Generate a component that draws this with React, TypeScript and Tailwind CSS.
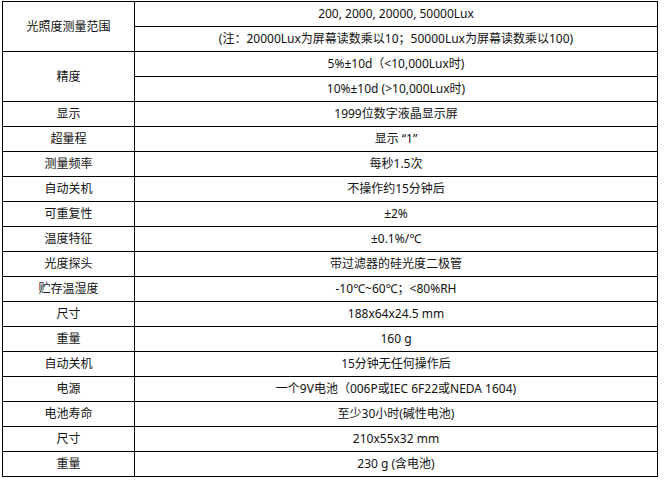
import React from "react";

type Row = { label: string; values: string[] };

const rows: Row[] = [
  {
    label: "光照度测量范围",
    values: [
      "200, 2000, 20000, 50000Lux",
      "(注：20000Lux为屏幕读数乘以10；50000Lux为屏幕读数乘以100)",
    ],
  },
  {
    label: "精度",
    values: ["5%±10d（<10,000Lux时)", "10%±10d (>10,000Lux时)"],
  },
  { label: "显示", values: ["1999位数字液晶显示屏"] },
  { label: "超量程", values: ["显示 “1”"] },
  { label: "测量频率", values: ["每秒1.5次"] },
  { label: "自动关机", values: ["不操作约15分钟后"] },
  { label: "可重复性", values: ["±2%"] },
  { label: "温度特征", values: ["±0.1%/℃"] },
  { label: "光度探头", values: ["带过滤器的硅光度二极管"] },
  { label: "贮存温湿度", values: ["-10℃~60℃；<80%RH"] },
  { label: "尺寸", values: ["188x64x24.5 mm"] },
  { label: "重量", values: ["160 g"] },
  { label: "自动关机", values: ["15分钟无任何操作后"] },
  { label: "电源", values: ["一个9V电池（006P或IEC 6F22或NEDA 1604)"] },
  { label: "电池寿命", values: ["至少30小时(碱性电池)"] },
  { label: "尺寸", values: ["210x55x32 mm"] },
  { label: "重量", values: ["230 g (含电池)"] },
];

export default function App() {
  return (
    <div
      className="w-[664px] h-[484px] bg-white pl-[2px] pt-[1px] text-[12px] text-[#111]"
      style={{ fontFamily: '"Noto Sans", "Noto Sans CJK SC", sans-serif' }}
    >
      <table className="border-collapse w-[656px] table-fixed">
        <colgroup>
          <col className="w-[132px]" />
          <col />
        </colgroup>
        <tbody>
          {rows.map((r, i) =>
            r.values.map((v, j) => (
              <tr key={`${i}-${j}`} className="h-[25px]">
                {j === 0 && (
                  <td
                    rowSpan={r.values.length}
                    className="border border-black text-center align-middle p-0 leading-[16px]"
                  >
                    {r.label}
                  </td>
                )}
                <td className="border border-black text-center align-middle p-0 leading-[16px] whitespace-nowrap">
                  {v}
                </td>
              </tr>
            ))
          )}
        </tbody>
      </table>
    </div>
  );
}
